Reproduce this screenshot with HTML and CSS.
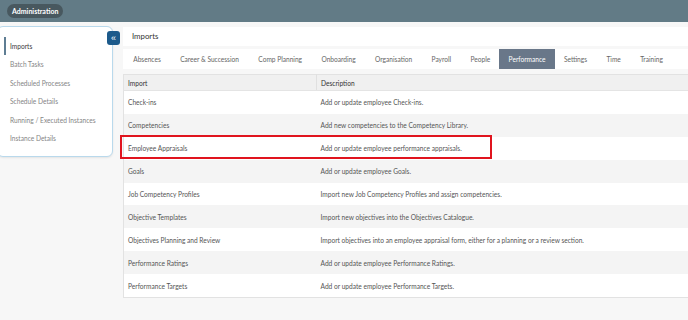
FILE: index.html
```html
<!DOCTYPE html>
<html lang="en">
<head>
    <meta charset="UTF-8">
    <title>Imports</title>
    <link rel="stylesheet" href="styles.css">
</head>
<body>

<header class="topbar">
    <span class="app-pill">Administration</span>
</header>

<div class="layout">
    <!-- Left menu -->
    <nav class="side-menu">
        <button class="collapse-btn">&laquo;</button>
        <ul>
            <li class="active">Imports</li>
            <li>Batch Tasks</li>
            <li>Scheduled Processes</li>
            <li>Schedule Details</li>
            <li>Running / Executed Instances</li>
            <li>Instance Details</li>
        </ul>
    </nav>

    <main class="content">
        <div class="page-title">Imports</div>

        <ul class="tabs">
            <li>Absences</li>
            <li>Career &amp; Succession</li>
            <li>Comp Planning</li>
            <li>Onboarding</li>
            <li>Organisation</li>
            <li>Payroll</li>
            <li>People</li>
            <li class="active">Performance</li>
            <li>Settings</li>
            <li>Time</li>
            <li>Training</li>
        </ul>

        <table class="imports">
            <thead>
                <tr><th>Import</th><th>Description</th></tr>
            </thead>
            <tbody>
                <tr><td>Check-ins</td><td>Add or update employee Check-ins.</td></tr>
                <tr><td>Competencies</td><td>Add new competencies to the Competency Library.</td></tr>
                <tr class="highlight"><td>Employee Appraisals</td><td>Add or update employee performance appraisals.</td></tr>
                <tr><td>Goals</td><td>Add or update employee Goals.</td></tr>
                <tr><td>Job Competency Profiles</td><td>Import new Job Competency Profiles and assign competencies.</td></tr>
                <tr><td>Objective Templates</td><td>Import new objectives into the Objectives Catalogue.</td></tr>
                <tr><td>Objectives Planning and Review</td><td>Import objectives into an employee appraisal form, either for a planning or a review section.</td></tr>
                <tr><td>Performance Ratings</td><td>Add or update employee Performance Ratings.</td></tr>
                <tr><td>Performance Targets</td><td>Add or update employee Performance Targets.</td></tr>
            </tbody>
        </table>
    </main>
</div>

</body>
</html>
```

FILE: styles.css
```css
body {
    margin: 0;
    font-family: "Lato", "Noto Sans", sans-serif;
    font-size: 6.6px;
    color: #444;
    background-color: #f7f7f7;
    overflow: hidden;
}

ul {
    list-style: none;
    margin: 0;
    padding: 0;
}

/* Top bar */
.topbar {
    height: 22px;
    background-color: #627b86;
    display: flex;
    align-items: center;
    padding-left: 7px;
}

.app-pill {
    background-color: #48585f;
    color: #fff;
    font-weight: bold;
    font-size: 7px;
    padding: 3px 5px;
    border-radius: 8px;
}

.layout {
    display: flex;
    align-items: flex-start;
}

/* Side menu */
.side-menu {
    position: relative;
    width: 116px;
    height: 131px;
    margin-top: 4px;
    margin-left: -3px;
    padding-left: 6px;
    box-sizing: border-box;
    background-color: #fff;
    border: 1px solid #b9d9ec;
    border-radius: 6px;
    box-shadow: 0 1px 2px rgba(0, 0, 0, 0.08);
}

.side-menu ul {
    padding-top: 10px;
}

.side-menu li {
    height: 18.4px;
    line-height: 18.4px;
    padding-left: 6px;
    color: #858585;
}

.side-menu li.active {
    color: #3a3a3a;
    border-left: 2px solid #5e7d93;
    padding-left: 4px;
}

.collapse-btn {
    position: absolute;
    top: 4px;
    right: -8px;
    width: 13px;
    height: 14px;
    padding: 0;
    border: none;
    border-radius: 3px;
    background-color: #1c5a8b;
    color: #fff;
    font-size: 9px;
    line-height: 12px;
    cursor: pointer;
}

/* Main content */
.content {
    flex: 1;
    margin-left: 10px;
    margin-top: 5px;
}

.page-title {
    background-color: #fff;
    height: 19px;
    line-height: 19px;
    padding-left: 9px;
    font-size: 7.8px;
    color: #333;
}

.tabs {
    display: flex;
    margin-top: 3px;
    height: 20px;
    background-color: #fff;
    padding-left: 0.5px;
}

.tabs li {
    padding: 0 9.7px;
    line-height: 20px;
    color: #666;
}

.tabs li.active {
    background-color: #697789;
    color: #fff;
    padding: 0 9.2px;
    margin: 0 -0.5px;
}

/* Table */
.imports {
    width: 100%;
    margin-top: 5px;
    border-collapse: collapse;
    background-color: #fff;
    border: 1px solid #e2e2e2;
    border-right: none;
}

.imports th {
    text-align: left;
    font-weight: normal;
    color: #333;
    background-color: #f0f0f0;
    height: 15px;
    padding: 0 4px;
    border-bottom: 1px solid #e4e4e4;
}

.imports th:first-child {
    width: 184px;
    border-right: 1px solid #e0e0e0;
}

.imports td {
    height: 22.9px;
    padding: 0 4px;
    color: #555;
}

.imports tbody tr:nth-child(even) {
    background-color: #f4f4f4;
}

.imports tr.highlight td {
    position: relative;
}

.imports tr.highlight td:first-child::after {
    content: "";
    position: absolute;
    left: -4px;
    top: -2px;
    width: 368px;
    height: 20px;
    border: 2px solid #e0141e;
}
```
